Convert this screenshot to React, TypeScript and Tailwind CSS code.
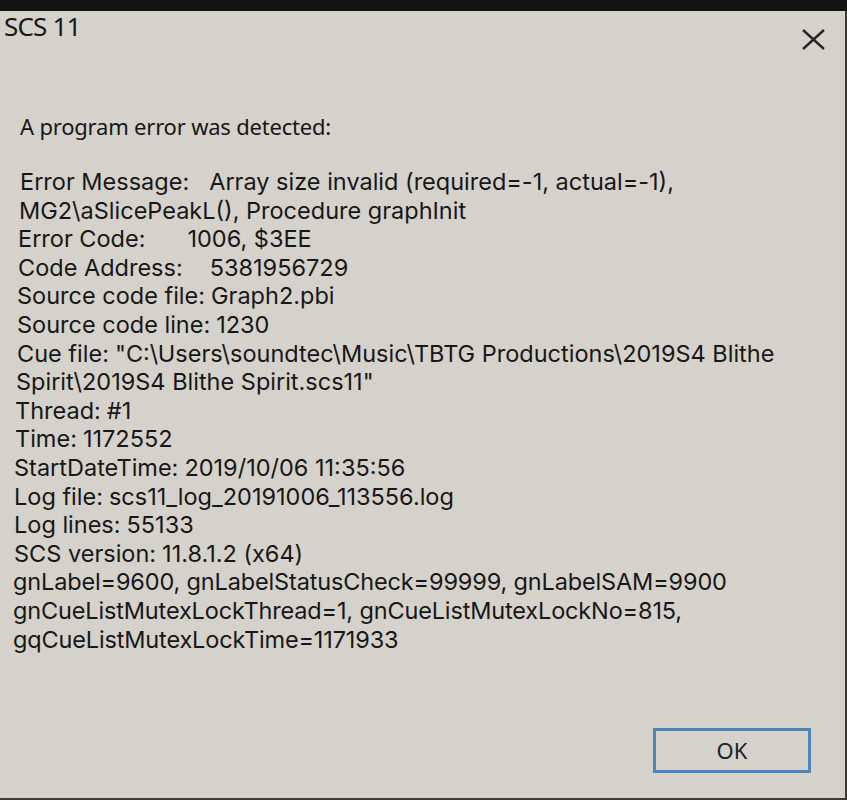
export default function App() {
  const lines: { label: string; gap?: string; value: string; indent: string }[] = [
    { label: "Error Message:", gap: "ml-[20px]", value: "Array size invalid (required=-1, actual=-1),", indent: "pl-[20px]" },
    { label: "", value: "MG2\\aSlicePeakL(), Procedure graphInit", indent: "pl-[19px]" },
    { label: "Error Code:", gap: "ml-[42px]", value: "1006, $3EE", indent: "pl-[18px]" },
    { label: "Code Address:", gap: "ml-[27px]", value: "5381956729", indent: "pl-[18px]" },
    { label: "Source code file:", gap: "ml-[6px]", value: "Graph2.pbi", indent: "pl-[17px]" },
    { label: "Source code line:", gap: "ml-[6px]", value: "1230", indent: "pl-[17px]" },
    { label: "Cue file:", gap: "ml-[6px]", value: "\"C:\\Users\\soundtec\\Music\\TBTG Productions\\2019S4 Blithe", indent: "pl-[17px]" },
    { label: "", value: "Spirit\\2019S4 Blithe Spirit.scs11\"", indent: "pl-[16px]" },
    { label: "Thread:", gap: "ml-[6px]", value: "#1", indent: "pl-[15px]" },
    { label: "Time:", gap: "ml-[6px]", value: "1172552", indent: "pl-[15px]" },
    { label: "StartDateTime:", gap: "ml-[6px]", value: "2019/10/06 11:35:56", indent: "pl-[14px]" },
    { label: "Log file:", gap: "ml-[6px]", value: "scs11_log_20191006_113556.log", indent: "pl-[14px]" },
    { label: "Log lines:", gap: "ml-[6px]", value: "55133", indent: "pl-[14px]" },
    { label: "SCS version:", gap: "ml-[6px]", value: "11.8.1.2 (x64)", indent: "pl-[14px]" },
    { label: "", value: "gnLabel=9600, gnLabelStatusCheck=99999, gnLabelSAM=9900", indent: "pl-[13px]" },
    { label: "", value: "gnCueListMutexLockThread=1, gnCueListMutexLockNo=815,", indent: "pl-[13px]" },
    { label: "", value: "gqCueListMutexLockTime=1171933", indent: "pl-[13px]" },
  ]

  return (
    <div
      className="w-[847px] h-[800px] bg-[#1a1a1a] overflow-hidden flex flex-col"
      style={{ fontFamily: '"Noto Sans", "Open Sans", sans-serif' }}
    >
      <div className="h-[11px] shrink-0 bg-[#141414]" />
      <div className="flex-1 flex flex-col bg-[#d4d2cb] border-r-[2px] border-[#3a3a3a] text-[#171717]">
        <div className="flex items-start justify-between h-[51px]">
          <div className="pl-[4px] pt-[2px] text-[26px] leading-none tracking-[-0.8px]">SCS 11</div>
          <div className="pr-[19px] pt-[17px] text-[#262626]">
            <svg width="25" height="23" viewBox="0 0 25 23" fill="none" stroke="currentColor" strokeWidth="2.4">
              <path d="M2 2 L23 21 M23 2 L2 21" />
            </svg>
          </div>
        </div>
        <div className="pl-[20px] pt-[50px] text-[22px] leading-[29px] tracking-[-0.2px]">A program error was detected:</div>
        <div
          className="pt-[27px] text-[23.5px] leading-[28.6px]"
          style={{ fontFamily: 'Inter, "Noto Sans", sans-serif' }}
        >
          {lines.map((l, i) => (
            <div key={i} className={`whitespace-pre ${l.indent} ${i >= 14 ? "tracking-[-0.15px]" : ""}`}>
              {l.label && <span>{l.label}</span>}
              <span className={l.label ? l.gap : ""}>{l.value}</span>
            </div>
          ))}
        </div>
        <div className="flex-1" />
        <div className="flex justify-end pr-[34px] pb-[25px]">
          <button className="w-[158px] h-[45px] border-[3px] border-[#4d86b8] bg-[#d4d2cb] text-[22px] text-[#222]">
            OK
          </button>
        </div>
        <div className="h-[2px] bg-[#3a3a3a]" />
      </div>
    </div>
  )
}
